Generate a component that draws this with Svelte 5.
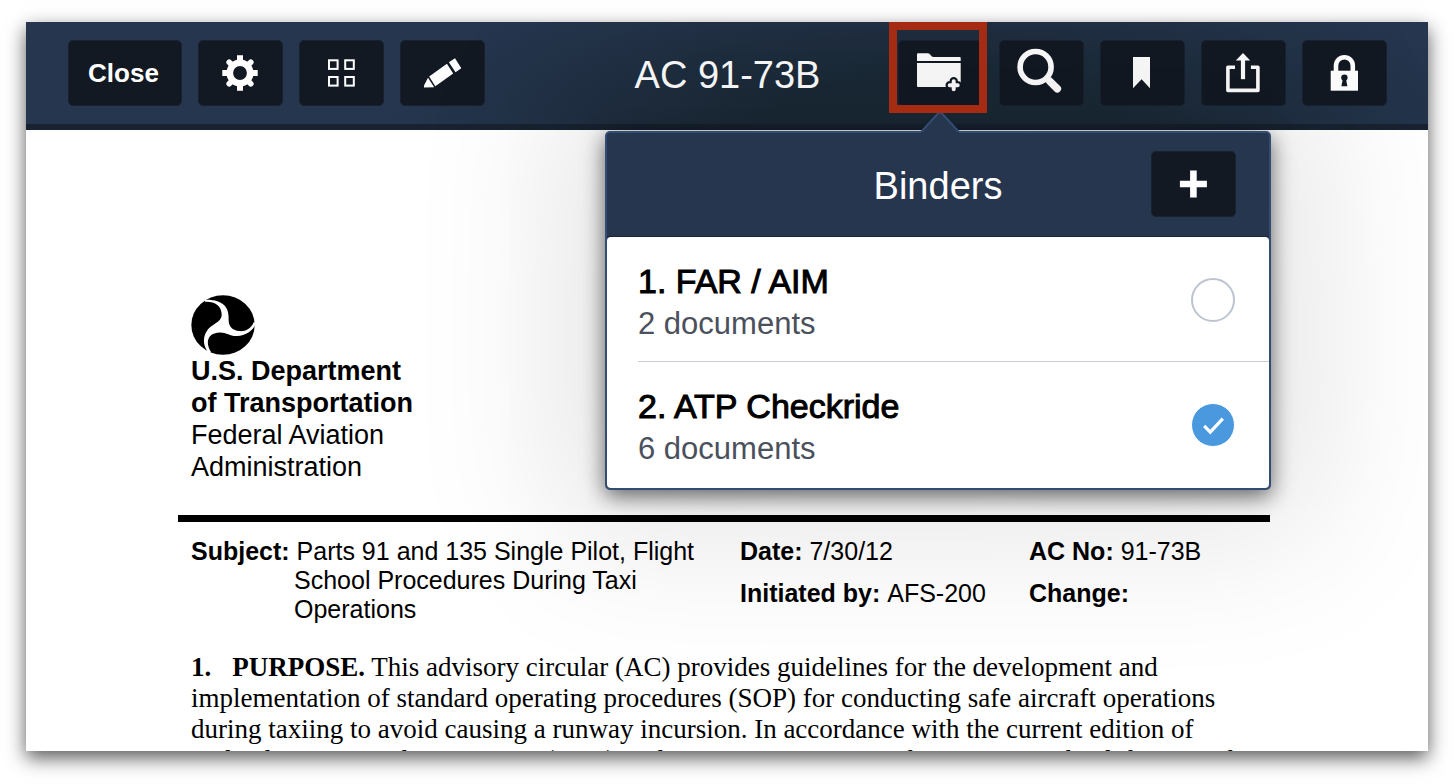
<script>
  let binders = $state([
    { id: 'far-aim', name: '1. FAR / AIM', count: 2, included: false },
    { id: 'atp', name: '2. ATP Checkride', count: 6, included: true }
  ]);
</script>

<main class="viewer">
  <header class="toolbar">
    <div class="group">
      <button class="btn close" type="button">Close</button>
      <button class="btn" type="button" aria-label="Settings">
        <svg viewBox="0 0 85 66" aria-hidden="true">
          <g transform="translate(42 33)">
            <circle r="10.2" fill="none" stroke="#fff" stroke-width="6.6" />
            <g stroke="#fff" stroke-width="6">
              <path d="M0 -17.7V-11M0 17.7V11M-17.7 0H-11M17.7 0H11" />
              <path stroke-width="5.6" stroke-linecap="round" d="M-10.8 -10.8L-8 -8M10.8 -10.8L8 -8M-10.8 10.8L-8 8M10.8 10.8L8 8" />
            </g>
          </g>
        </svg>
      </button>
      <button class="btn" type="button" aria-label="Page thumbnails">
        <svg viewBox="0 0 85 66" aria-hidden="true">
          <g fill="none" stroke="#fff" stroke-width="2">
            <rect x="30" y="20.3" width="8.6" height="8.6" />
            <rect x="46.2" y="20.3" width="8.6" height="8.6" />
            <rect x="30" y="37" width="8.6" height="8.6" />
            <rect x="46.2" y="37" width="8.6" height="8.6" />
          </g>
        </svg>
      </button>
      <button class="btn" type="button" aria-label="Annotate">
        <svg viewBox="0 0 85 66" aria-hidden="true">
          <g fill="#fff">
            <path d="M55 18.2L61.3 28.2L55.5 32.3L48.9 22.3Z" />
            <path d="M46.9 23.8L53.2 33.4L35.3 46.2L29.2 36.6Z" />
            <path d="M28 37.8L34.2 47.3L24 47.6V45.6Z" />
          </g>
        </svg>
      </button>
    </div>

    <h1>AC 91-73B</h1>

    <div class="group end">
      <div class="binder-anchor">
        <button class="btn" type="button" aria-label="Add to binder" aria-expanded="true">
          <svg viewBox="0 0 85 66" aria-hidden="true">
            <path fill="#fff" d="M19 21V14.3Q19 13.2 20.1 13.2H29.5Q31 13.2 32.2 14.5L33.6 16.2Q34.4 17 35.6 17H61.8Q62.7 17 62.7 18V21Z" />
            <path fill="#fff" d="M19 23H62.7V46Q62.7 47 61.7 47H20Q19 47 19 46Z" />
            <path fill="none" stroke="#121923" stroke-width="8.4" stroke-linejoin="round" stroke-linecap="round" d="M55.7 41.3V49.3M51.7 45.3H59.7" />
            <path fill="none" stroke="#fff" stroke-width="4" stroke-linecap="round" d="M55.7 41.3V49.3M51.7 45.3H59.7" />
          </svg>
        </button>
        <span class="highlight"></span>

        <section class="popover" aria-labelledby="binders-title">
          <svg class="arrow" viewBox="0 0 40 21" aria-hidden="true">
            <path fill="#26364f" d="M1 21L18 1.5Q20 -0.5 22 1.5L39 21Z" />
            <path fill="none" stroke="#334c74" stroke-width="2" d="M1 20L18 1.5Q20 -0.5 22 1.5L39 20" />
          </svg>
          <div class="popover-head">
            <h2 id="binders-title">Binders</h2>
            <button class="btn" type="button" aria-label="New binder">
              <svg viewBox="0 0 85 66" aria-hidden="true">
                <path stroke="#fff" stroke-width="6.6" d="M42.4 19.5V46.5M28.9 33H55.9" />
              </svg>
            </button>
          </div>
          <ul>
            {#each binders as binder (binder.id)}
              <li>
                <label for={binder.id}>
                  <span class="text">
                    <span class="name">{binder.name}</span>
                    <span class="count">{binder.count} documents</span>
                  </span>
                  <span class="tick">
                    <input id={binder.id} type="checkbox" bind:checked={binder.included} />
                    <svg viewBox="0 0 44 44" aria-hidden="true">
                      <path fill="none" stroke="#fff" stroke-width="3.2" d="M13.2 22.8L19.3 29.2L31.8 15.6" />
                    </svg>
                  </span>
                </label>
              </li>
            {/each}
          </ul>
        </section>
      </div>
      <button class="btn" type="button" aria-label="Search">
        <svg viewBox="0 0 85 66" aria-hidden="true">
          <circle cx="36.6" cy="27" r="15.5" fill="none" stroke="#fff" stroke-width="5.6" />
          <path stroke="#fff" stroke-width="6" d="M46.8 37.5L51.3 42" />
          <path stroke="#fff" stroke-width="7.6" stroke-linecap="round" d="M50.9 41.4L58.3 48.8" />
        </svg>
      </button>
      <button class="btn" type="button" aria-label="Bookmark">
        <svg viewBox="0 0 85 66" aria-hidden="true">
          <path fill="#fff" d="M33 17H50V48.2L41.6 39.3L33 48.2Z" />
        </svg>
      </button>
      <button class="btn" type="button" aria-label="Share">
        <svg viewBox="0 0 85 66" aria-hidden="true">
          <path fill="none" stroke="#fff" stroke-width="3.6" stroke-linejoin="round" d="M34 27.2H26.9V50.4H56.9V27.2H49.9" />
          <path fill="none" stroke="#fff" stroke-width="4.2" d="M42 39.2V19" />
          <path fill="#fff" d="M42 13L49.2 20.6H34.8Z" />
        </svg>
      </button>
      <button class="btn" type="button" aria-label="Lock">
        <svg viewBox="0 0 85 66" aria-hidden="true">
          <path fill="none" stroke="#fff" stroke-width="4.6" d="M34 32V25.6A8.4 8.4 0 0 1 50.8 25.6V32" />
          <path fill="#fff" d="M28.7 30.7H56V50.7H28.7Z" />
          <circle cx="42.4" cy="37.6" r="3.2" fill="#121923" />
          <path fill="#121923" d="M41 38H43.8L45.4 46.2H39.4Z" />
        </svg>
      </button>
    </div>
  </header>

  <article class="document">
    <div class="agency">
      <svg viewBox="90 44 194 181" aria-hidden="true">
        <ellipse cx="187" cy="134.500" rx="96" ry="90.500" />
        <path fill="#fff" d="M132 64C160 62 183 75 183 103C183 120 170 126 155 136C130 152 118 188 143 219L151 217C133 190 138 158 178 157C200 157 210 170 230 168C258 166 280 150 287 128L280 126C272 146 255 154 238 153C210 150 203 135 204 112C205 85 190 56 132 58Z" />
      </svg>
      <strong>U.S. Department<br />of Transportation</strong>
      <span>Federal Aviation<br />Administration</span>
    </div>
    <dl class="meta">
      <div class="subject">
        <dt>Subject:</dt>
        <dd>Parts 91 and 135 Single Pilot, Flight School Procedures During Taxi Operations</dd>
      </div>
      <div class="pair">
        <div><dt>Date:</dt> <dd>7/30/12</dd></div>
        <div><dt>Initiated by:</dt> <dd>AFS-200</dd></div>
      </div>
      <div class="pair">
        <div><dt>AC No:</dt> <dd>91-73B</dd></div>
        <div><dt>Change:</dt> <dd></dd></div>
      </div>
    </dl>
    <p>
      <b class="number">1.</b><b>PURPOSE.</b> This advisory circular (AC) provides guidelines for the development and
      implementation of standard operating procedures (SOP) for conducting safe aircraft operations
      during taxiing to avoid causing a runway incursion. In accordance with the current edition of
      Federal Aviation Administration (FAA) Order 7050.1, Runway Safety Program, the definition of
    </p>
  </article>
</main>

<style>
  :global(body) {
    background: #fff;
  }

  .viewer {
    box-sizing: border-box;
    height: calc(100vh - 55px);
    margin: 22px 26px 33px;
    overflow: hidden;
    background: #fff;
    box-shadow: 0 7px 18px rgba(0, 0, 0, 0.65);
    font-family: 'Liberation Sans', Arial, sans-serif;
    color: #000;
  }

  .toolbar {
    position: relative;
    z-index: 1;
    display: grid;
    grid-template-columns: 1fr auto 1fr;
    align-items: center;
    padding: 18px 41px 18px 42px;
    background: radial-gradient(ellipse 560px 160px at 65% 100%, #1a2936 30%, #26364f) #26364f;
    border-bottom: 6px solid #182230;
  }

  .group {
    display: flex;
    gap: 16px;
  }

  .end {
    justify-content: flex-end;
  }

  h1,
  h2 {
    margin: 0;
    padding-top: 4px;
    font-size: 38px;
    line-height: 44px;
    font-weight: 400;
    text-align: center;
    color: #fff;
  }

  .btn {
    display: block;
    width: 85px;
    height: 66px;
    padding: 0;
    border: 1px solid #172130;
    border-radius: 5px;
    background: #121923;
    color: #fff;
    font: bold 26px 'Liberation Sans', Arial, sans-serif;
  }

  .btn svg {
    display: block;
    width: 85px;
    height: 66px;
    margin: -1px;
  }

  .btn.close {
    width: 114px;
    padding-right: 3px;
  }

  .binder-anchor {
    position: relative;
  }

  .highlight {
    position: absolute;
    z-index: 2;
    inset: -18px -4px -7px -9px;
    border: 8px solid #a52c12;
    pointer-events: none;
  }

  .popover {
    position: absolute;
    z-index: 1;
    top: 91px;
    right: -288px;
    box-sizing: border-box;
    width: 666px;
    border: 2px solid #334c74;
    border-radius: 5px;
    background: #26364f;
    box-shadow:
      0 6px 22px rgba(0, 0, 0, 0.6),
      0 0 150px 50px rgba(0, 0, 0, 0.1);
  }

  .arrow {
    position: absolute;
    top: -21px;
    left: 313px;
    width: 40px;
    height: 21px;
  }

  .popover-head {
    display: grid;
    grid-template-columns: 1fr auto 1fr;
    align-items: center;
    padding: 18px 33px 19px;
    border-bottom: 1px solid #1b2738;
  }

  .popover-head h2 {
    grid-column: 2;
  }

  .popover-head .btn {
    justify-self: end;
  }

  ul {
    margin: 0;
    padding: 0 0 2px 31px;
    list-style: none;
    border-radius: 4px;
    background: #fff;
  }

  li + li {
    border-top: 1px solid #c8cdd6;
  }

  label {
    display: flex;
    align-items: center;
    justify-content: space-between;
    padding: 20px 34px 16px 0;
  }

  .text {
    display: grid;
    gap: 2px;
    padding-top: 4px;
  }

  .name {
    font-size: 34px;
    line-height: 40px;
    -webkit-text-stroke: 1px #000;
  }

  .count {
    font-size: 31px;
    line-height: 42px;
    color: #4a505c;
  }

  .tick {
    display: grid;
    margin-bottom: 2px;
  }

  .tick > * {
    grid-area: 1 / 1;
    width: 44px;
    height: 44px;
  }

  .tick svg {
    pointer-events: none;
  }

  input {
    appearance: none;
    box-sizing: border-box;
    margin: 0;
    border: 2px solid #bcc4d0;
    border-radius: 50%;
    background: #fff;
  }

  input:checked {
    border: 1px solid #fff;
    background: #4a98dd;
  }

  .document {
    padding: 165px 158px 0 152px;
  }

  .agency {
    display: grid;
    padding: 0 13px 32px;
    font-size: 27px;
    line-height: 32px;
  }

  .agency svg {
    width: 64px;
    height: 60px;
  }

  .meta {
    display: grid;
    grid-template-columns: 549fr 289fr 241fr;
    margin: 0;
    padding: 15px 0 28px 13px;
    border-top: 7px solid #000;
    font-size: 25px;
    line-height: 29px;
  }

  .subject {
    padding-left: 103px;
    text-indent: -103px;
  }

  .pair {
    display: grid;
    align-content: start;
    gap: 13px;
  }

  dt,
  dd {
    display: inline;
    margin: 0;
  }

  dt {
    font-weight: 700;
  }

  p {
    margin: 0;
    padding-left: 13px;
    font-family: 'Liberation Serif', 'Times New Roman', serif;
    font-size: 27px;
    line-height: 31px;
  }

  .number {
    margin-right: 21px;
  }
</style>
